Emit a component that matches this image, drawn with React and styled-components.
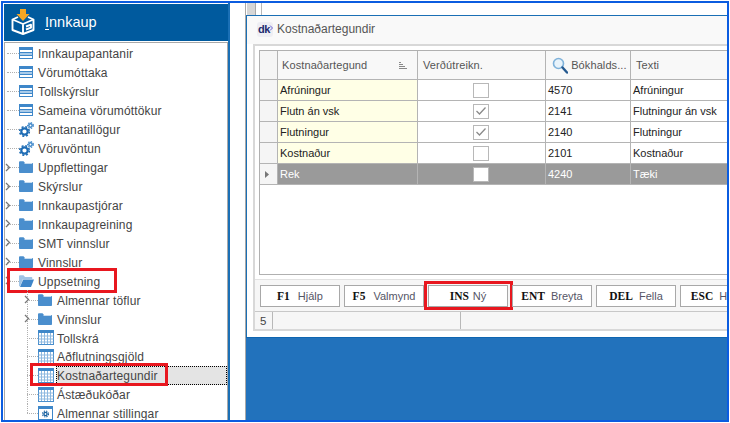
import React from "react";
import styled, { createGlobalStyle } from "styled-components";

const Global = createGlobalStyle`
  html, body { margin: 0; padding: 0; background: #fff; overflow: hidden; }
  * { box-sizing: border-box; }
`;

const Frame = styled.div`
  width: 728px; height: 421px; margin: 1px;
  border: 2px solid #0b5ce0;
  display: flex; overflow: hidden; background: #fff;
  font-family: "Open Sans", "DejaVu Sans", sans-serif;
`;
const Sidebar = styled.aside`
  width: 227px; flex: none; display: flex; flex-direction: column;
  border-right: 2px solid #1a6fb5;
`;
const SideHeader = styled.header`
  height: 37px; margin: 1px 0 1px 1px; background: #005a9e; flex: none;
  display: flex; align-items: center; gap: 10px; padding: 0 0 2px 7px;
  color: #fff; font-size: 14.500px;
  font-family: "Liberation Sans", sans-serif;
`;
const Underline = styled.span` text-decoration: underline; text-underline-offset: 2px; `;
const Tree = styled.div`
  flex: 1; margin-left: 1px; padding-top: 1px; overflow: hidden;
  border: 1px solid #a9a9a9; border-width: 1px 1px 0 1px;
`;
const Row = styled.div`
  position: relative; height: 18.95px; display: flex; align-items: center;
  padding-left: ${p => p.$depth ? 19 : 0}px;
  font-family: "Liberation Sans", sans-serif;
  font-size: 12px; color: #444;
`;
const Branch = styled.span`
  flex: none; width: 14px; height: 100%; position: relative; display: block;
`;
const DotH = styled.i`
  position: absolute; left: ${p => p.$depth ? 3 : 2}px; right: 0; top: 50%;
  border-top: 1px dotted #b0b0b0;
`;
const DotV = styled.i`
  position: absolute; left: 3px; top: 0; bottom: ${p => p.$end ? "50%" : 0};
  border-left: 1px dotted #b0b0b0;
`;
const Chevron = styled.svg`
  position: absolute; left: 0; top: 5px; width: 6px; height: 9px;
`;
const IconBox = styled.span`
  flex: none; width: 18px; display: flex; align-items: center;
`;
const Label = styled.span`
  flex: 1; align-self: stretch; display: flex; align-items: center; padding: 2px 0 0 1px;
  white-space: nowrap; letter-spacing: 0.15px;
  ${p => p.$selected && `background: #e4e4e4; outline: 1px dotted #000; outline-offset: -1px;`}
`;
const Mark = styled.span`
  position: absolute; border: 3px solid #e8171f; pointer-events: none;
  left: ${p => p.$l}px; width: ${p => p.$w}px; top: ${p => p.$t}px; height: ${p => p.$h}px;
`;

const Main = styled.main`
  flex: 1; display: flex; flex-direction: column; margin-left: 15px;
  border-left: 1px solid #a8a8a8; min-width: 0;
`;
const TopStrip = styled.div`
  height: 12px; flex: none; background: #fff; display: flex; padding-left: 1px;
`;
const StripTab = styled.span`
  width: 9px; background: #d6d6d6; border-right: 1px solid #a8a8a8;
`;
const StripEdge = styled.span`
  width: 6px; border-right: 1px solid #b8b8b8;
`;
const Window = styled.section`
  height: 322px; flex: none; background: #fff; display: flex; flex-direction: column;
  border-top: 1px solid #1a6fb5; border-left: 1px solid #1a6fb5; overflow: hidden;
`;
const TitleBar = styled.div`
  height: 28px; flex: none; background: #f9f9f9; display: flex; align-items: center;
  padding: 0 0 2px 10px; gap: 4px; font-family: "Liberation Sans", sans-serif;
  font-size: 12px; color: #555;
`;
const Dk = styled.span`
  width: 16px; height: 15px; border-radius: 3px; background: #eeeef3;
  display: flex; align-items: center; padding-left: 1px; position: relative;
  font: bold 11px "Liberation Sans", sans-serif; color: #1d2a6e; letter-spacing: -0.5px;
`;
const DkArrow = styled.svg`
  position: absolute; right: 0; top: 3px; width: 4px; height: 6px;
`;
const Panel = styled.div`
  flex: none; height: 287px; margin-left: 6px; display: flex; flex-direction: column;
  border: 2px solid #d8d8d8; border-right: 0;
`;
const GridWrap = styled.div`
  flex: none; height: 229px; padding: 4px 0 0 4px; overflow: hidden;
`;
const Grid = styled.div`
  width: 500px; height: 225px; border: 1px solid #b0b0b0;
  font-family: "Liberation Sans", sans-serif; font-size: 11px; color: #222;
`;
const GridRow = styled.div`
  display: grid; grid-template-columns: 17px 140px 128px 85px 1fr;
  height: ${p => p.$head ? 29 : 21}px;
  border-bottom: 1px solid #b4b4b4;
  ${p => p.$current && `background: #9a9a9a; color: #fff;`}
`;
const Cell = styled.div`
  display: flex; align-items: center; min-width: 0; white-space: nowrap; position: relative;
  border-left: 1px solid #b4b4b4;
  padding-left: ${p => p.$pad ?? 2}px;
  justify-content: ${p => p.$center ? "center" : "flex-start"};
  ${p => p.$center && `padding-right: 2px;`}
  ${p => p.$yellow && `background: #ffffe6;`}
  ${p => p.$stub && `background: #f5f5f5; border-left: 0; padding-left: 5px;`}
`;
const HeadCell = styled(Cell)`
  background: #f8f8f8; color: #555; font-size: 11px;
  letter-spacing: 0.1px; justify-content: flex-start;
`;
const Check = styled.span`
  width: 16px; height: 15px; background: #fff; border: 1px solid #b8b8b8;
  display: flex; align-items: center; justify-content: center;
`;
const SortIcon = styled.svg`
  position: absolute; right: 10px; top: 11px; width: 8px; height: 7px;
`;
const ButtonBar = styled.div`
  flex: none; height: 32px; margin-top: 4px; background: #f6f6f6;
  display: flex; gap: 4px; padding: 5px 0 0 5px; border-top: 1px solid #e2e2e2;
`;
const FnButton = styled.div`
  position: relative; flex: none; width: 80px; height: 22px; background: #fff;
  border: 1px solid #a8a8a8; display: flex; align-items: center; justify-content: center;
  gap: ${p => p.$gap}px; font-family: "Liberation Sans", sans-serif; font-size: 11px; color: #556;
`;
const Key = styled.b`
  font-family: "Liberation Serif", serif; font-size: 11.500px; color: #111;
`;
const ButtonMark = styled.span`
  position: absolute; inset: -5px -6px -4px -5px; border: 3px solid #e8171f;
`;
const StatusBar = styled.div`
  flex: 1; background: #f6f6f6; border-top: 1px solid #c8c8c8; display: flex;
  font: 11.500px "Liberation Sans", sans-serif; color: #444;
`;
const StatusCell = styled.div`
  width: ${p => p.$w}px; flex: none; display: flex; align-items: center; padding-left: 5px;
  border-right: 1px solid #b8b8b8;
`;
const Desk = styled.div` flex: 1; background: #2272bc; border-top: 1px solid #0f65b0; `;

const ListIcon = () => (
  <svg width="14" height="12" viewBox="0 0 14 12">
    <rect x=".5" y=".5" width="13" height="11" fill="#fff" stroke="#3e87c9" />
    <rect x="1" y="1" width="12" height="2" fill="#3e87c9" />
    <rect x="1" y="5" width="12" height="1" fill="#3e87c9" />
    <rect x="1" y="6" width="12" height="2" fill="#a9cbe9" />
    <rect x="1" y="8" width="12" height="1" fill="#3e87c9" />
  </svg>
);
const GearIcon = () => (
  <svg width="15" height="15" viewBox="0 0 15 15">
    <circle cx="5.5" cy="9.5" r="3.2" fill="none" stroke="#1f6db5" strokeWidth="2.2" />
    <circle cx="5.5" cy="9.5" r="4.8" fill="none" stroke="#1f6db5" strokeWidth="1.6" strokeDasharray="2 1.8" />
    <circle cx="11.5" cy="3.5" r="1.7" fill="none" stroke="#3e87c9" strokeWidth="1.5" />
    <circle cx="11.5" cy="3.5" r="2.9" fill="none" stroke="#3e87c9" strokeWidth="1.1" strokeDasharray="1.4 1.3" />
  </svg>
);
const FolderIcon = () => (
  <svg width="14" height="12" viewBox="0 0 14 12">
    <path d="M0 1.5C0 .7.5.3 1.2.3h3.3L6 2h7c.6 0 1 .4 1 1v8c0 .6-.4 1-1 1H1c-.6 0-1-.4-1-1z" fill="#4a8ecd" />
    <path d="M5.500 2.300h7.500v.7H5.500z" fill="#fff" />
  </svg>
);
const OpenFolderIcon = () => (
  <svg width="15" height="12" viewBox="0 0 15 12">
    <path d="M0 1.5C0 .7.5.3 1.2.3h3.3L6 2h6.5c.5 0 .8.3.8.8V4H4L1 11.5 0 11z" fill="#9fc4e6" />
    <path d="M4.2 4.5H15L12 12H1z" fill="#3f86c9" />
  </svg>
);
const TableIcon = () => (
  <svg width="16" height="15" viewBox="0 0 16 15">
    <rect x=".5" y=".5" width="15" height="14" fill="#fff" stroke="#4a8fcd" />
    <rect x="0" y="0" width="16" height="3" fill="#3e87c9" />
    <path d="M.5 6h15M.5 9h15M.5 12h15M3.5 3v11M6.5 3v11M9.5 3v11M12.5 3v11" stroke="#8db8e0" strokeWidth="1" fill="none" />
  </svg>
);
const SettingsIcon = () => (
  <svg width="15" height="14" viewBox="0 0 15 14">
    <rect x=".5" y=".5" width="14" height="13" fill="#fff" stroke="#3e87c9" />
    <rect x="0" y="0" width="15" height="3" fill="#3e87c9" />
    <circle cx="7.5" cy="8" r="1.6" fill="none" stroke="#17609f" strokeWidth="1.4" />
    <circle cx="7.5" cy="8" r="3" fill="none" stroke="#17609f" strokeWidth="1.1" strokeDasharray="1.3 1.1" />
  </svg>
);
const icons = { list: ListIcon, gear: GearIcon, folder: FolderIcon, open: OpenFolderIcon, table: TableIcon, settings: SettingsIcon };

const BoxLogo = () => (
  <svg width="24" height="26" viewBox="0 0 24 26">
    <path d="M9 0h6v5h3.500L12 12 5.500 5H9z" fill="#f5a623" />
    <g fill="none" stroke="#fff" strokeWidth="1.9" strokeLinejoin="round">
      <path d="M7 8 1.500 10.500v10.500L12 25l10.500-4V10.500L17 8" />
      <path d="M1.500 10.500 12 15l10.500-4.500M12 15v10" />
      <path d="M15 17.500l5-1.800v3l-5 1.800" />
    </g>
  </svg>
);
const Magnifier = () => (
  <svg width="16" height="17" viewBox="0 0 16 17">
    <circle cx="6.500" cy="6.500" r="5" fill="#e8f3fb" stroke="#7fb2da" strokeWidth="1.6" />
    <path d="M10.500 10.500 15 15.500" stroke="#24598f" strokeWidth="2.400" strokeLinecap="round" />
  </svg>
);
const Tick = () => (
  <svg width="12" height="10" viewBox="0 0 12 10">
    <path d="M1.500 5 4.500 8 10.500 1.500" fill="none" stroke="#8a8a8a" strokeWidth="1.300" />
  </svg>
);

const tree = [
  ["list", "Innkaupapantanir"], ["list", "Vörumóttaka"], ["list", "Tollskýrslur"], ["list", "Sameina vörumóttökur"],
  ["gear", "Pantanatillögur"], ["gear", "Vöruvöntun"],
  ["folder", "Uppflettingar", 0, 1], ["folder", "Skýrslur", 0, 1], ["folder", "Innkaupastjórar", 0, 1],
  ["folder", "Innkaupagreining", 0, 1], ["folder", "SMT vinnslur", 0, 1], ["folder", "Vinnslur", 0, 1],
  ["open", "Uppsetning", 0, 1],
  ["folder", "Almennar töflur", 1, 1], ["folder", "Vinnslur", 1, 1],
  ["table", "Tollskrá", 1], ["table", "Aðflutningsgjöld", 1], ["table", "Kostnaðartegundir", 1],
  ["table", "Ástæðukóðar", 1], ["settings", "Almennar stillingar", 1],
];
const rows = [
  ["Afrúningur", false, "4570", "Afrúningur"],
  ["Flutn án vsk", true, "2141", "Flutningur án vsk"],
  ["Flutningur", true, "2140", "Flutningur"],
  ["Kostnaður", false, "2101", "Kostnaður"],
  ["Rek", false, "4240", "Tæki", true],
];
const buttons = [["F1", "Hjálp", 8], ["F5", "Valmynd", 8], ["INS", "Ný", 4], ["ENT", "Breyta", 6], ["DEL", "Fella", 6], ["ESC", "Hætta", 6]];

export default function App() {
  return (
    <Frame>
      <Global />
      <Sidebar>
        <SideHeader>
          <BoxLogo />
          <span><Underline>I</Underline>nnkaup</span>
        </SideHeader>
        <Tree>
          {tree.map(([icon, text, depth, expander], i) => {
            const Icon = icons[icon];
            const last = i === tree.length - 1;
            return (
              <Row key={i} $depth={depth}>
                <Branch>
                  {depth ? <DotV $end={last} /> : null}
                  <DotH $depth={depth} />
                  {expander && (
                    <Chevron viewBox="0 0 6 9">
                      <path d="M1 1l3.500 3.500L1 8" fill="none" stroke="#777" strokeWidth="1.300" />
                    </Chevron>
                  )}
                </Branch>
                <IconBox><Icon /></IconBox>
                <Label $selected={text === "Kostnaðartegundir"}>{text}</Label>
                {text === "Uppsetning" && <Mark $l={2} $w={110} $t={-3} $h={25} />}
                {text === "Kostnaðartegundir" && <Mark $l={25} $w={138} $t={-3} $h={23} />}
              </Row>
            );
          })}
        </Tree>
      </Sidebar>
      <Main>
        <TopStrip>
          <StripTab />
          <StripEdge />
        </TopStrip>
        <Window>
          <TitleBar>
            <Dk>
              dk
              <DkArrow viewBox="0 0 4 6"><path d="M1 .5 3.500 3 1 5.500" fill="none" stroke="#6a5fd0" strokeWidth="1" /></DkArrow>
            </Dk>
            Kostnaðartegundir
          </TitleBar>
          <Panel>
            <GridWrap>
              <Grid>
                <GridRow $head>
                  <Cell $stub />
                  <HeadCell $pad={4}>
                    Kostnaðartegund
                    <SortIcon viewBox="0 0 8 7">
                      <path d="M0 .5h2M0 2.500h4M0 4.500h6M0 6.500h8" stroke="#888" strokeWidth="1" />
                    </SortIcon>
                  </HeadCell>
                  <HeadCell $pad={5}>Verðútreikn.</HeadCell>
                  <HeadCell $pad={6}><Magnifier />&nbsp;Bókhalds...</HeadCell>
                  <HeadCell $pad={5}>Texti</HeadCell>
                </GridRow>
                {rows.map(([name, checked, acc, text, current]) => (
                  <GridRow key={name} $current={current}>
                    <Cell $stub>
                      {current && (
                        <svg width="4" height="7" viewBox="0 0 4 7"><path d="M0 0l4 3.500L0 7z" fill="#777" /></svg>
                      )}
                    </Cell>
                    <Cell $yellow={!current}>{name}</Cell>
                    <Cell $center $pad={0}>
                      <Check>{checked && <Tick />}</Check>
                    </Cell>
                    <Cell $pad={2}>{acc}</Cell>
                    <Cell $pad={2}>{text}</Cell>
                  </GridRow>
                ))}
              </Grid>
            </GridWrap>
            <ButtonBar>
              {buttons.map(([k, label, gap]) => (
                <FnButton key={k} $gap={gap}>
                  <Key>{k}</Key>
                  <span>{label}</span>
                  {k === "INS" && <ButtonMark />}
                </FnButton>
              ))}
            </ButtonBar>
            <StatusBar>
              <StatusCell $w={18}>5</StatusCell>
              <StatusCell $w={188} />
            </StatusBar>
          </Panel>
        </Window>
        <Desk />
      </Main>
    </Frame>
  );
}
